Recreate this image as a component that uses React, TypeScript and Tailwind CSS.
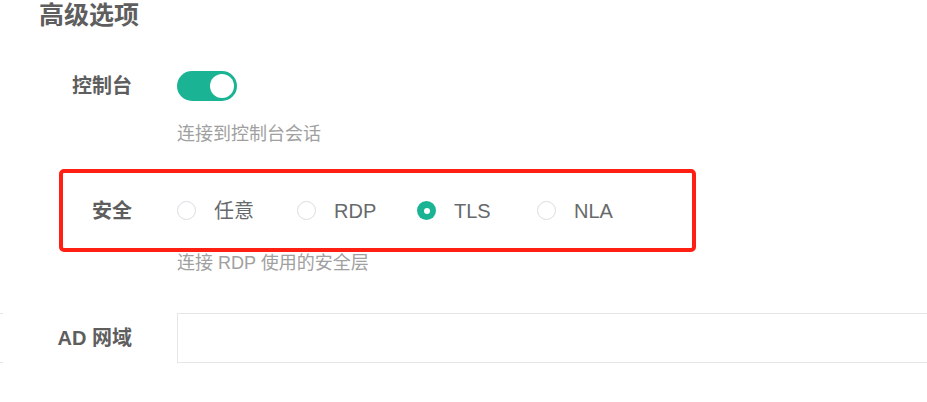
import { useState } from 'react';

const FONT = { fontFamily: '"Liberation Sans", "Noto Sans CJK SC", sans-serif' };

const options = ['任意', 'RDP', 'TLS', 'NLA'];

function Radio({ label, checked, onClick }: { label: string; checked: boolean; onClick: () => void }) {
  return (
    <button onClick={onClick} className="flex items-center w-[120px] h-[30px] text-left">
      {checked ? (
        <span className="w-[19px] h-[19px] rounded-full bg-[#1ab394] flex items-center justify-center shrink-0">
          <span className="w-[6px] h-[6px] rounded-full bg-white" />
        </span>
      ) : (
        <span className="w-[19px] h-[19px] rounded-full border border-[#dcdde2] bg-white shrink-0" />
      )}
      <span className="ml-[18px] text-[20px] leading-[30px] text-[#676a6c]">{label}</span>
    </button>
  );
}

export default function App() {
  const [console, setConsole] = useState(true);
  const [security, setSecurity] = useState('TLS');

  return (
    <div className="w-[927px] h-[402px] bg-white overflow-hidden relative" style={FONT}>
      {/* Heading */}
      <div className="h-[32px] flex items-center pl-[39px] text-[25px] font-bold text-[#5e5e5e]">
        高级选项
      </div>

      {/* Console toggle */}
      <div className="mt-[39px] h-[30px] flex items-center">
        <div className="w-[132px] shrink-0 text-right text-[20px] font-bold text-[#5e5e5e]">控制台</div>
        <button
          onClick={() => setConsole(!console)}
          className={`ml-[45px] w-[60px] h-[30px] rounded-full flex items-center px-[3px] ${
            console ? 'bg-[#1ab394] justify-end' : 'bg-[#e5e6e7] justify-start'
          }`}
        >
          <span className="w-[24px] h-[24px] rounded-full bg-white" />
        </button>
      </div>
      <div className="mt-[23px] pl-[177px] text-[18px] leading-[20px] text-[#a0a0a0]">连接到控制台会话</div>

      {/* Security */}
      <div className="mt-[25px] ml-[59px] w-[637px] h-[83px] border-[4px] border-[#ff2013] rounded-[5px] flex items-center">
        <div className="w-[69px] shrink-0 text-right text-[20px] font-bold text-[#5e5e5e]">安全</div>
        <div className="ml-[45px] flex items-center">
          {options.map(o => (
            <Radio key={o} label={o} checked={security === o} onClick={() => setSecurity(o)} />
          ))}
        </div>
      </div>
      <div className="mt-[1px] pl-[177px] text-[18px] leading-[20px] text-[#a0a0a0]">连接 RDP 使用的安全层</div>

      {/* AD domain */}
      <div className="mt-[40px] h-[50px] flex items-center relative">
        <div className="absolute left-0 top-0 w-[3px] h-[50px] border-y border-[#e5e6e7]" />
        <div className="w-[132px] shrink-0 text-right text-[20px] font-bold text-[#5e5e5e]">AD 网域</div>
        <input className="ml-[45px] w-[800px] h-[50px] border border-[#e5e6e7] outline-none px-3 shrink-0" />
      </div>
    </div>
  );
}
